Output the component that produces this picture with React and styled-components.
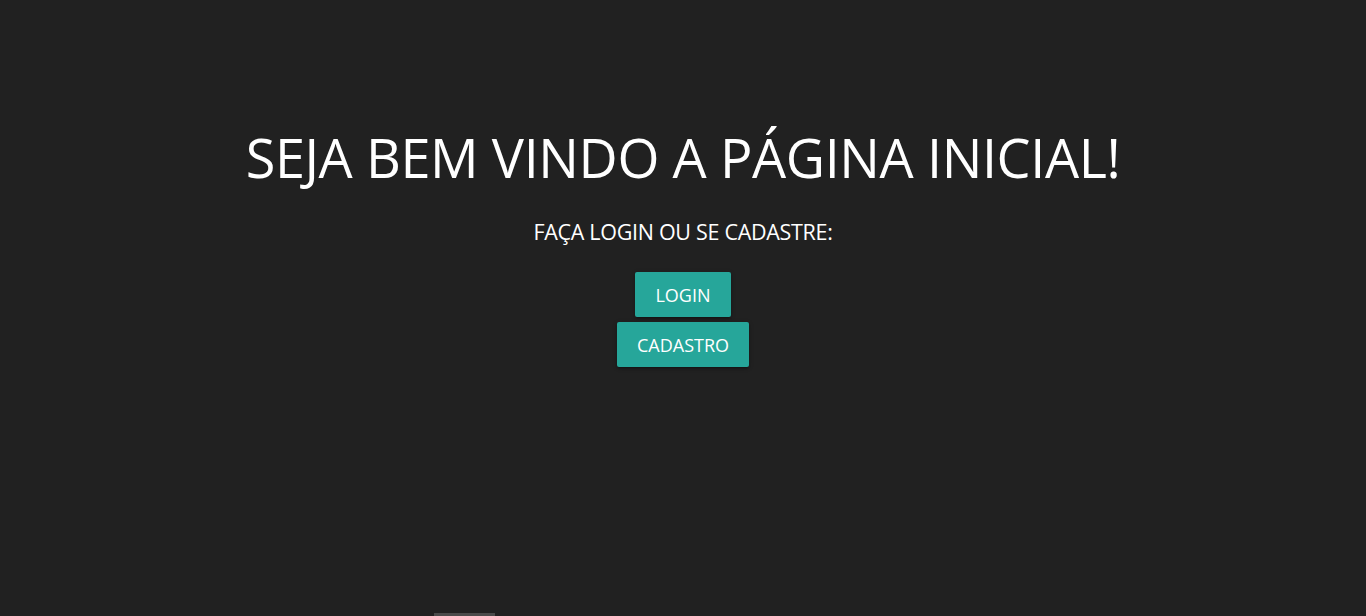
import React from "react";
import styled, { createGlobalStyle } from "styled-components";

const Global = createGlobalStyle`
  html, body { margin: 0; padding: 0; background: #212121; }
  body { font-family: "Open Sans", "Noto Sans", sans-serif; color: #fff; }
`;

const Page = styled.div`
  position: relative;
  height: 616px;
  overflow: hidden;
  display: flex;
  flex-direction: column;
  align-items: center;
  padding-top: 121px;
  box-sizing: border-box;
`;

const Title = styled.h1`
  margin: 0;
  font-size: 54px;
  font-weight: 400;
  line-height: 72px;
  letter-spacing: -0.4px;
  color: #fff;
`;

const Subtitle = styled.p`
  margin: 25px 0 0;
  font-size: 21.5px;
  line-height: 28px;
  letter-spacing: -0.3px;
  color: #fff;
`;

const Buttons = styled.div`
  display: flex;
  flex-direction: column;
  align-items: center;
  gap: 5px;
  margin-top: 26px;
`;

const Button = styled.button`
  height: 45px;
  padding: 0 20px;
  border: none;
  border-radius: 2px;
  background: #26a69a;
  color: #fff;
  font-family: inherit;
  font-size: 18px;
  text-transform: uppercase;
  cursor: pointer;
  box-shadow: 0 2px 2px 0 rgba(0,0,0,0.14), 0 3px 1px -2px rgba(0,0,0,0.12), 0 1px 5px 0 rgba(0,0,0,0.2);
`;

const BottomBar = styled.div`
  position: absolute;
  left: 434px;
  bottom: 0;
  width: 61px;
  height: 3px;
  background: #4a4a4a;
`;

export default function App() {
  return (
    <>
      <Global />
      <Page>
        <Title>SEJA BEM VINDO A PÁGINA INICIAL!</Title>
        <Subtitle>FAÇA LOGIN OU SE CADASTRE:</Subtitle>
        <Buttons>
          <Button>Login</Button>
          <Button>Cadastro</Button>
        </Buttons>
        <BottomBar />
      </Page>
    </>
  );
}
